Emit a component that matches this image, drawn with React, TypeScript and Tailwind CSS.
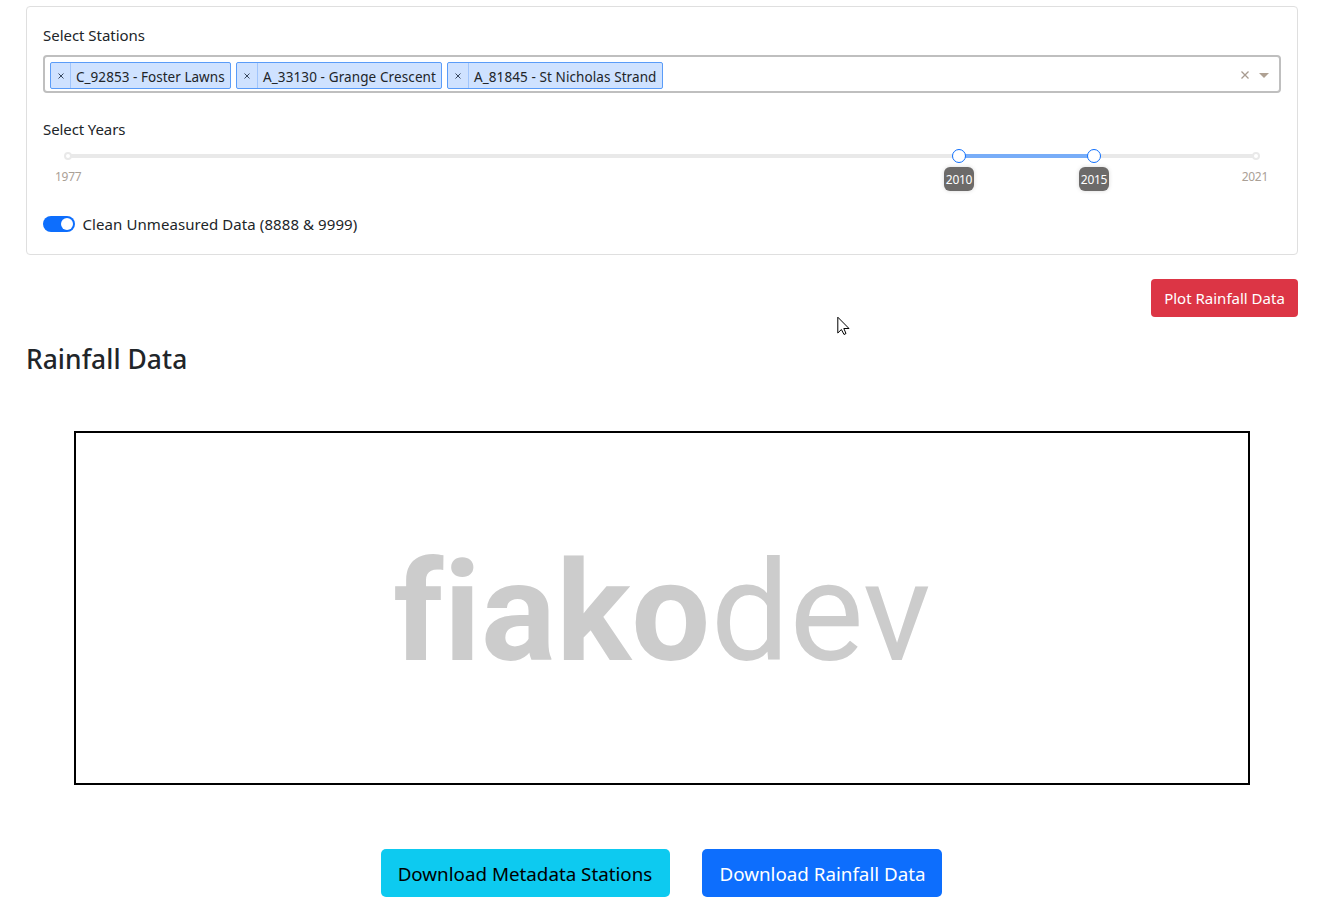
import React from "react";

const stations = [
  { name: "C_92853 - Foster Lawns", width: "w-[181px]", remove: "w-5", tracking: "tracking-[0.04px]" },
  { name: "A_33130 - Grange Crescent", width: "w-[206px]", remove: "w-[21px]", tracking: "tracking-[0.11px]" },
  { name: "A_81845 - St Nicholas Strand", width: "w-[216px]", remove: "w-[21px]", tracking: "tracking-[0.09px]" },
];

function StationSelect() {
  return (
    <div className="flex h-[38px] items-center rounded-[4px] border-2 border-[#bfbfbf] pl-[5px] pr-[10px]">
      <div className="flex flex-1 gap-[5px] pt-[2px]">
        {stations.map((s) => (
          <div
            key={s.name}
            className={`flex h-[27px] items-center rounded-[2px] border border-[#5a9cf8] bg-[#cfe2ff] ${s.width}`}
          >
            <button className={`flex h-[25px] shrink-0 items-center justify-center border-r border-[#a0c5fc] pt-[2px] ${s.remove}`}>
              <svg width="6" height="6" viewBox="0 0 6 6" stroke="#38485f" strokeWidth="1" fill="none">
                <path d="M0.5 0.5 5.5 5.5M5.5 0.5 0.5 5.5" />
              </svg>
            </button>
            <span className={`whitespace-nowrap pl-[5px] pt-[3px] text-[13.5px] leading-5 ${s.tracking}`}>{s.name}</span>
          </div>
        ))}
      </div>
      <svg className="mr-[10px] mt-px" width="8" height="8" viewBox="0 0 8 8" stroke="#a79b90" strokeWidth="1.3" fill="none">
        <path d="M0.5 0.5 7.5 7.5M7.5 0.5 0.5 7.5" />
      </svg>
      <svg className="mt-[2px]" width="10" height="5" viewBox="0 0 10 5" fill="#afa193">
        <path d="M0 0H10L5 5Z" />
      </svg>
    </div>
  );
}

function YearSlider() {
  return (
    <div className="relative mx-[25px] mt-[13px] h-1 rounded-full bg-[#e9e9e9] text-[12px] leading-4 tracking-[-0.3px]">
      <div className="absolute left-[891px] top-0 h-1 w-[135px] bg-[#78adf8]" />
      <span className="absolute -left-1 -top-[2px] size-2 rounded-full border-2 border-[#e9e9e9] bg-white" />
      <span className="absolute -right-1 -top-[2px] size-2 rounded-full border-2 border-[#e9e9e9] bg-white" />
      <span className="absolute left-[884px] -top-[5px] size-[14px] rounded-full border border-[#0d6efd] bg-white" />
      <span className="absolute left-[1019px] -top-[5px] size-[14px] rounded-full border border-[#0d6efd] bg-white" />
      <span className="absolute -left-[13px] top-[15px] text-[#aaa096]">1977</span>
      <span className="absolute -right-3 top-[15px] text-[#aaa096]">2021</span>
      <span className="absolute left-[876px] top-[13px] flex h-6 w-[30px] items-center justify-center rounded-[6px] bg-[#6c6a69] pt-[2px] text-white shadow-[0_0_4px_#d9d9d9]">2010</span>
      <span className="absolute left-[1011px] top-[13px] flex h-6 w-[30px] items-center justify-center rounded-[6px] bg-[#6c6a69] pt-[2px] text-white shadow-[0_0_4px_#d9d9d9]">2015</span>
    </div>
  );
}

export default function App() {
  return (
    <main className="relative h-[907px] overflow-hidden bg-white pl-[26px] pr-7 pt-[6px] font-['Noto_Sans','Open_Sans',sans-serif] text-[#212529]">
      <section className="h-[249px] rounded-[4px] border border-[#dfdfdf] p-4">
        <h2 className="mb-2 text-[15px] leading-6 tracking-[-0.03px]"><span>Select Stations</span></h2>
        <StationSelect />
        <h2 className="mt-6 text-[15px] leading-6 tracking-[-0.1px]"><span>Select Years</span></h2>
        <YearSlider />
        <label className="mt-[54px] flex h-6 items-center gap-[7.5px] text-[15px] leading-6 tracking-[0.08px]">
          <span className="flex h-4 w-8 items-center justify-end rounded-full bg-[#0d6efd] pr-[2px]">
            <span className="size-3 rounded-full bg-white" />
          </span>
          <span>Clean Unmeasured Data (8888 &amp; 9999)</span>
        </label>
      </section>
      <div className="mt-6 flex justify-end">
        <button className="h-[38px] w-[147px] whitespace-nowrap rounded-[4px] bg-[#dc3545] text-[15px] text-white">
          <span>Plot Rainfall Data</span>
        </button>
      </div>
      <h1 className="mt-[25px] h-[34px] text-[26.4px] font-medium leading-[34px] tracking-[0.05px]"><span>Rainfall Data</span></h1>
      <section className="mx-12 mt-[55px] flex h-[354px] justify-center border-2 border-black font-[Roboto,sans-serif] text-[140px] leading-[354px] text-[#ccc] [font-variant-ligatures:none]">
        <span className="mt-[2px] font-bold tracking-[0.3px]">fiako</span>
        <span className="mt-[2px]">dev</span>
      </section>
      <div className="mt-16 flex justify-center gap-8 pr-[2px] text-[18.8px]">
        <button className="h-12 w-[289px] whitespace-nowrap rounded-[5px] bg-[#0dcaf0] pt-[2px] text-black"><span>Download Metadata Stations</span></button>
        <button className="h-12 w-[240px] whitespace-nowrap rounded-[5px] bg-[#0d6efd] pl-[2px] pt-[2px] text-white"><span>Download Rainfall Data</span></button>
      </div>
      <svg className="absolute left-[837px] top-[316px]" width="13" height="20" viewBox="0 0 13 20" fill="white" stroke="black" strokeWidth="1">
        <path d="M0.8 1.2V17L4.4 13.5 7 18.5 9 17.5 6.8 12.5H12Z" />
      </svg>
    </main>
  );
}
